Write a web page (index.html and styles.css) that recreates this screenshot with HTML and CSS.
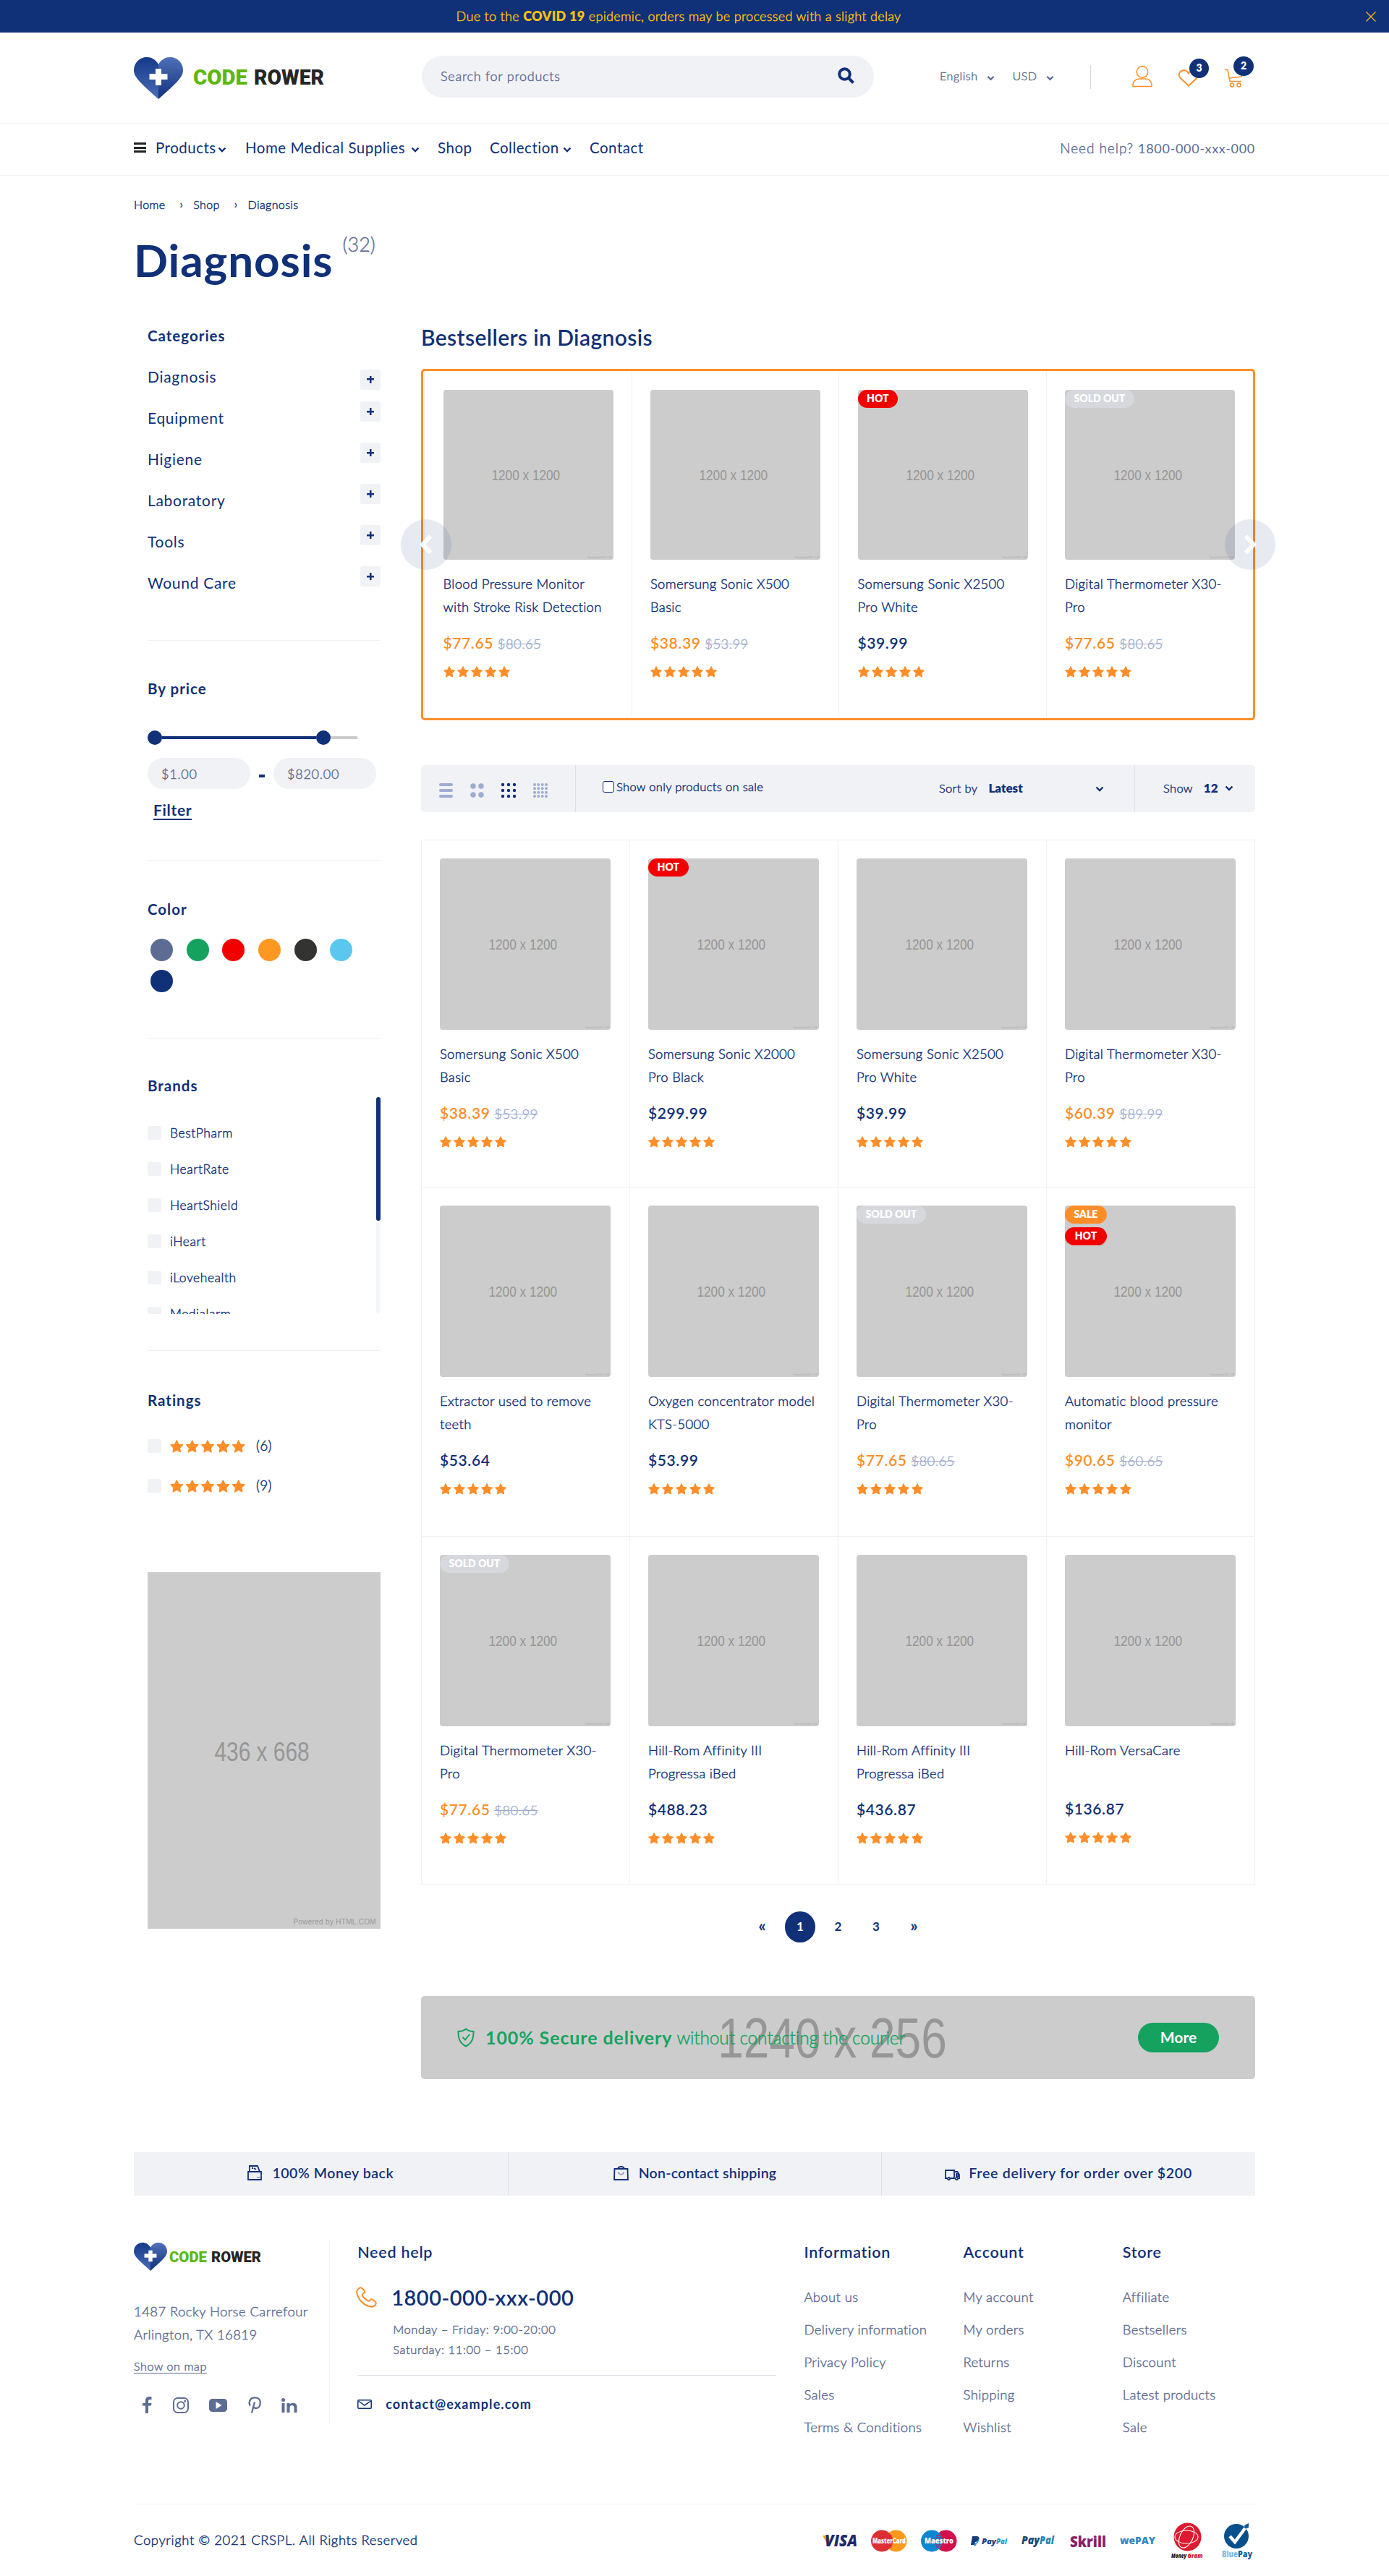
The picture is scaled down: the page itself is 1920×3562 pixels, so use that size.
FILE: index.html
```html
<!DOCTYPE html>
<html lang="en">
<head>
<meta charset="utf-8">
<title>Diagnosis – Code Rower</title>
<link rel="stylesheet" href="styles.css">
</head>
<body>
<svg class="sprite" width="0" height="0" aria-hidden="true">
  <defs>
    <linearGradient id="gl" x1="0" y1="0" x2="0" y2="1"><stop offset="0" stop-color="#153a8a"/><stop offset="1" stop-color="#4a6cb6"/></linearGradient>
    <linearGradient id="gr" x1="0" y1="0" x2="0" y2="1"><stop offset="0" stop-color="#4f70b8"/><stop offset="1" stop-color="#12307c"/></linearGradient>
  </defs>
  <symbol id="heart" viewBox="0 0 68 58" preserveAspectRatio="none">
    <path fill="url(#gl)" d="M34 10C30 3 24 0 18 0C8 0 0 8 0 18C0 27 7 34 34 58Z"/>
    <path fill="url(#gr)" d="M34 10C38 3 44 0 50 0C60 0 68 8 68 18C68 27 61 34 34 58Z"/>
    <path fill="#fff" d="M30 16h8v7h8.500v8H38v8h-8v-8h-8.500v-8H30z"/>
  </symbol>
  <symbol id="star" viewBox="0 0 16 16"><path stroke="#ff8e28" stroke-linejoin="round" d="M8 .6l2.300 4.700 5.200.8-3.700 3.700.8 5.200L8 12.700 3.400 15l.8-5.200L.5 6.100l5.200-.8z"/></symbol>
  <symbol id="stars" viewBox="0 0 92 16"><use href="#star" width="16" height="16"/><use href="#star" x="19" width="16" height="16"/><use href="#star" x="38" width="16" height="16"/><use href="#star" x="57" width="16" height="16"/><use href="#star" x="76" width="16" height="16"/></symbol>
  <symbol id="chev" viewBox="0 0 12 8"><path d="M1.500 1.500L6 6l4.500-4.500" fill="none" stroke="currentColor" stroke-width="2.400"/></symbol>
</svg>

<div class="notice">
  <p>Due to the <b>COVID 19</b> epidemic, orders may be processed with a slight delay</p>
  <svg width="14" height="14" viewBox="0 0 14 14"><path d="M.5.5l13 13M13.500.5l-13 13" stroke="#ffc20a" stroke-width="1.200"/></svg>
</div>

<header class="head"><div class="wrap head-row">
  <svg class="logo" width="270" height="60" viewBox="0 0 270 60"><use href="#heart" y="1" width="68" height="58"/><text x="82" y="39" textLength="75" lengthAdjust="spacingAndGlyphs" fill="#5cb811">CODE</text><text x="166" y="39" textLength="97" lengthAdjust="spacingAndGlyphs" fill="#262626">ROWER</text></svg>
  <div class="search"><span>Search for products</span><svg width="23" height="23" viewBox="0 0 23 23" fill="none" stroke="#103078" stroke-width="4"><circle cx="9.500" cy="9.500" r="7.300"/><path d="M14.500 14.500l7 7"/></svg></div>
  <div class="locale"><span>English</span><svg class="chev"><use href="#chev"/></svg><span class="usd">USD</span><svg class="chev"><use href="#chev"/></svg></div>
  <i class="bar"></i>
  <div class="tools">
    <svg width="28" height="30" viewBox="0 0 28 30" fill="none" stroke="#ff8e28" stroke-width="1.500"><circle cx="14" cy="8.500" r="7.700"/><path d="M1 28.500v-2a8.500 8.500 0 0 1 8.500-8.500h9a8.500 8.500 0 0 1 8.500 8.500v2z"/></svg>
    <div class="tool"><svg width="28" height="25" viewBox="0 0 30 26" fill="none" stroke="#ff8e28" stroke-width="2"><path d="M15 24L3 12.500C-1.500 7.500 2 1 8 1c4 0 6 2.500 7 4.500C16 3.500 18 1 22 1c6 0 9.500 6.500 5 11.500z"/></svg><b class="count c3">3</b></div>
    <div class="tool"><svg width="30" height="27" viewBox="0 0 30 27" fill="none" stroke="#ff8e28" stroke-width="1.500"><path d="M0 1.500h4l3 16h16M6 13l17-2 2-7"/><circle cx="10" cy="22.500" r="2.500"/><circle cx="19.500" cy="22.500" r="2.500"/></svg><b class="count c2">2</b></div>
  </div>
</div></header>

<nav class="nav"><div class="wrap nav-row">
  <i class="burger"></i>
  <span class="n1">Products</span><svg class="chev"><use href="#chev"/></svg>
  <span class="n2">Home Medical Supplies</span><svg class="chev"><use href="#chev"/></svg>
  <span class="n3">Shop</span>
  <span class="n4">Collection</span><svg class="chev"><use href="#chev"/></svg>
  <span class="n5">Contact</span>
  <p class="help">Need help? <b>1800-000-xxx-000</b></p>
</div></nav>

<main class="wrap">
  <div class="crumbs"><span>Home</span><i>›</i><span>Shop</span><i>›</i><span>Diagnosis</span></div>
  <h1>Diagnosis<sup>(32)</sup></h1>

  <div class="cols">
    <aside>
      <section class="s-cat">
        <h3>Categories</h3>
        <ul class="cats">
          <li>Diagnosis<i></i></li><li>Equipment<i></i></li><li>Higiene<i></i></li><li>Laboratory<i></i></li><li>Tools<i></i></li><li>Wound Care<i></i></li>
        </ul>
      </section>
      <section class="s-price">
        <h3>By price</h3>
        <div class="slider"><i class="knob"></i><i class="fill"></i><i class="knob"></i><i class="rest"></i></div>
        <div class="range"><span>$1.00</span><i></i><span>$820.00</span></div>
        <a class="filter">Filter</a>
      </section>
      <section class="s-color">
        <h3>Color</h3>
        <div class="swatches"><i class="w1"></i><i class="w2"></i><i class="w3"></i><i class="w4"></i><i class="w5"></i><i class="w6"></i><i class="w7"></i></div>
      </section>
      <section class="s-brand">
        <h3>Brands</h3>
        <div class="brandbox">
          <ul class="brands"><li><i></i>BestPharm</li><li><i></i>HeartRate</li><li><i></i>HeartShield</li><li><i></i>iHeart</li><li><i></i>iLovehealth</li><li><i></i>Medialarm</li></ul>
          <div class="track"><i></i></div>
        </div>
      </section>
      <section class="s-rate">
        <h3>Ratings</h3>
        <div class="rate"><i></i><svg class="big"><use href="#stars"/></svg>(6)</div>
        <div class="rate"><i></i><svg class="big"><use href="#stars"/></svg>(9)</div>
      </section>
      <div class="ad"><span>436 x 668</span><small>Powered by HTML.COM</small></div>
    </aside>

    <div class="content">
      <h2>Bestsellers in Diagnosis</h2>
      <div class="best">
        <article><div class="ph"><span>1200 x 1200</span><small>Powered by HTML.COM</small></div><p>Blood Pressure Monitor<br>with Stroke Risk Detection</p><div class="price sale">$77.65 <s>$80.65</s></div><svg class="st"><use href="#stars"/></svg></article>
        <article><div class="ph"><span>1200 x 1200</span><small>Powered by HTML.COM</small></div><p>Somersung Sonic X500<br>Basic</p><div class="price sale">$38.39 <s>$53.99</s></div><svg class="st"><use href="#stars"/></svg></article>
        <article><div class="ph"><span>1200 x 1200</span><small>Powered by HTML.COM</small><div class="tags"><b class="hot">HOT</b></div></div><p>Somersung Sonic X2500<br>Pro White</p><div class="price">$39.99</div><svg class="st"><use href="#stars"/></svg></article>
        <article><div class="ph"><span>1200 x 1200</span><small>Powered by HTML.COM</small><div class="tags"><b class="sold">SOLD OUT</b></div></div><p>Digital Thermometer X30-<br>Pro</p><div class="price sale">$77.65 <s>$80.65</s></div><svg class="st"><use href="#stars"/></svg></article>
        <div class="arrow prev"><svg width="18" height="28" viewBox="0 0 18 28"><path d="M15 2.500L4 14l11 11.500" fill="none" stroke="#fff" stroke-width="6"/></svg></div>
        <div class="arrow next"><svg width="18" height="28" viewBox="0 0 18 28"><path d="M3 2.500L14 14 3 25.500" fill="none" stroke="#fff" stroke-width="6"/></svg></div>
      </div>

      <div class="bar-tools">
        <div class="views">
          <svg width="19" height="20" viewBox="0 0 19 20"><path d="M2 2h15M2 10h15M2 18h15" stroke="#9dacd0" stroke-width="4" stroke-linecap="round"/></svg>
          <svg width="19" height="20" viewBox="0 0 19 20"><path d="M4 4h0M15 4h0M4 16h0M15 16h0" stroke="#9dacd0" stroke-width="7.500" stroke-linecap="round"/></svg>
          <svg width="20" height="20" viewBox="0 0 20 20"><path d="M2 2h0M10 2h0M18 2h0M2 10h0M10 10h0M18 10h0M2 18h0M10 18h0M18 18h0" stroke="#103078" stroke-width="4.400" stroke-linecap="round"/></svg>
          <svg width="20" height="20" viewBox="0 0 20 20"><path d="M2 2h0M7.300 2h0M12.700 2h0M18 2h0M2 7.300h0M7.300 7.300h0M12.700 7.300h0M18 7.300h0M2 12.700h0M7.300 12.700h0M12.700 12.700h0M18 12.700h0M2 18h0M7.300 18h0M12.700 18h0M18 18h0" stroke="#9dacd0" stroke-width="4" stroke-linecap="round"/></svg>
        </div>
        <div class="only"><i></i>Show only products on sale</div>
        <div class="sort"><span>Sort by</span><b>Latest</b><svg class="chev"><use href="#chev"/></svg></div>
        <div class="show"><span>Show</span><b>12</b><svg class="chev"><use href="#chev"/></svg></div>
      </div>

      <div class="grid">
        <article><div class="ph"><span>1200 x 1200</span><small>Powered by HTML.COM</small></div><p>Somersung Sonic X500<br>Basic</p><div class="price sale">$38.39 <s>$53.99</s></div><svg class="st"><use href="#stars"/></svg></article>
        <article><div class="ph"><span>1200 x 1200</span><small>Powered by HTML.COM</small><div class="tags"><b class="hot">HOT</b></div></div><p>Somersung Sonic X2000<br>Pro Black</p><div class="price">$299.99</div><svg class="st"><use href="#stars"/></svg></article>
        <article><div class="ph"><span>1200 x 1200</span><small>Powered by HTML.COM</small></div><p>Somersung Sonic X2500<br>Pro White</p><div class="price">$39.99</div><svg class="st"><use href="#stars"/></svg></article>
        <article><div class="ph"><span>1200 x 1200</span><small>Powered by HTML.COM</small></div><p>Digital Thermometer X30-<br>Pro</p><div class="price sale">$60.39 <s>$89.99</s></div><svg class="st"><use href="#stars"/></svg></article>

        <article><div class="ph"><span>1200 x 1200</span><small>Powered by HTML.COM</small></div><p>Extractor used to remove<br>teeth</p><div class="price">$53.64</div><svg class="st"><use href="#stars"/></svg></article>
        <article><div class="ph"><span>1200 x 1200</span><small>Powered by HTML.COM</small></div><p>Oxygen concentrator model<br>KTS-5000</p><div class="price">$53.99</div><svg class="st"><use href="#stars"/></svg></article>
        <article><div class="ph"><span>1200 x 1200</span><small>Powered by HTML.COM</small><div class="tags"><b class="sold">SOLD OUT</b></div></div><p>Digital Thermometer X30-<br>Pro</p><div class="price sale">$77.65 <s>$80.65</s></div><svg class="st"><use href="#stars"/></svg></article>
        <article><div class="ph"><span>1200 x 1200</span><small>Powered by HTML.COM</small><div class="tags"><b class="off">SALE</b><b class="hot">HOT</b></div></div><p>Automatic blood pressure<br>monitor</p><div class="price sale">$90.65 <s>$60.65</s></div><svg class="st"><use href="#stars"/></svg></article>

        <article><div class="ph"><span>1200 x 1200</span><small>Powered by HTML.COM</small><div class="tags"><b class="sold">SOLD OUT</b></div></div><p>Digital Thermometer X30-<br>Pro</p><div class="price sale">$77.65 <s>$80.65</s></div><svg class="st"><use href="#stars"/></svg></article>
        <article><div class="ph"><span>1200 x 1200</span><small>Powered by HTML.COM</small></div><p>Hill-Rom Affinity III<br>Progressa iBed</p><div class="price">$488.23</div><svg class="st"><use href="#stars"/></svg></article>
        <article><div class="ph"><span>1200 x 1200</span><small>Powered by HTML.COM</small></div><p>Hill-Rom Affinity III<br>Progressa iBed</p><div class="price">$436.87</div><svg class="st"><use href="#stars"/></svg></article>
        <article class="short"><div class="ph"><span>1200 x 1200</span><small>Powered by HTML.COM</small></div><p>Hill-Rom VersaCare</p><div class="price">$136.87</div><svg class="st"><use href="#stars"/></svg></article>
      </div>

      <div class="pages"><span class="step">«</span><span class="on">1</span><span>2</span><span>3</span><span class="step">»</span></div>

      <div class="banner">
        <svg width="24" height="27" viewBox="0 0 24 27" fill="none" stroke="#15a25f" stroke-width="2"><path d="M12 1.500C9 4 5 5 1.500 5c0 9 1.500 16 10.500 20.500C21 21 22.500 14 22.500 5 19 5 15 4 12 1.500z"/><path d="M7.500 13l3.500 3.500 6-7.500"/></svg>
        <p><b>100% Secure delivery</b> <span>without contacting the courier</span></p>
        <span class="size">1240 x 256</span>
        <a class="more">More</a>
      </div>
    </div>
  </div>

  <div class="features">
    <div><svg width="20" height="21" viewBox="0 0 20 21" fill="none" stroke="#103078" stroke-width="1.800"><path d="M3 9V1h11l3 8M6 4h2M9 4l3 2M1 9h18v11H1z"/><path d="M13 17h4" stroke="#9aa3bb"/></svg>100% Money back</div>
    <div><svg width="21" height="20" viewBox="0 0 21 20" fill="none" stroke="#103078" stroke-width="1.800"><path d="M1.500 4h18l.5 15H1z"/><path d="M6 4c1-4 8-4 9 0"/><path d="M7 8c0 5 7 5 7 0" stroke="#9aa3bb"/></svg>Non-contact shipping</div>
    <div class="f3"><svg width="21" height="15" viewBox="0 0 21 15" fill="none" stroke="#103078" stroke-width="1.800"><path d="M3 12H1V1h12v11H8M13 3h4.500L20 7v5h-1M16 6h3v3h-3z"/><circle cx="5.500" cy="12.500" r="1.600"/><circle cx="16.500" cy="12.500" r="1.600"/></svg>Free delivery for order over $200</div>
  </div>

  <div class="foot">
    <div class="f-brand">
      <svg class="logo small" width="200" height="42" viewBox="0 0 200 42"><use href="#heart" width="46" height="39"/><text x="49" y="27" textLength="52" lengthAdjust="spacingAndGlyphs" fill="#5cb811">CODE</text><text x="107" y="27" textLength="69" lengthAdjust="spacingAndGlyphs" fill="#262626">ROWER</text></svg>
      <p>1487 Rocky Horse Carrefour<br>Arlington, TX 16819</p>
      <a>Show on map</a>
      <div class="social">
        <svg width="13" height="23" viewBox="0 0 13 23"><path fill="#5d6c92" d="M4 23V12.500H0V9h4V6c0-4 2-6 5.500-6H12.500v4h-2C8.800 4 8 4.700 8 6.200V9h4.500L12 12.500H8V23z"/></svg>
        <svg width="22" height="22" viewBox="0 0 22 22" fill="none" stroke="#5d6c92" stroke-width="2"><rect x="1" y="1" width="20" height="20" rx="5.500"/><circle cx="11" cy="11" r="4.800"/><circle cx="16.700" cy="5.300" r=".6"/></svg>
        <svg width="25" height="18" viewBox="0 0 25 18"><rect width="25" height="18" rx="4.500" fill="#5d6c92"/><path d="M9.500 4v10l8-5z" fill="#fff"/></svg>
        <svg width="18" height="23" viewBox="0 0 18 23" fill="none" stroke="#5d6c92" stroke-width="2.300"><path d="M5 22.500L9 7.500M2.800 12.500C1 10 .8 1.300 9.300 1.300c5 0 7.500 3 7.500 6.700 0 5-2.600 8-5.800 8-1.700 0-3-1-3-2"/></svg>
        <svg width="22" height="20" viewBox="0 0 22 20" fill="#5d6c92"><circle cx="2.500" cy="2.500" r="2.500"/><path d="M.5 7h4v13h-4zM7.500 7h4v1.800C13 6 21.500 5 21.500 12v8h-4v-7c0-4-6-4-6 0v7h-4z"/></svg>
      </div>
    </div>
    <div class="f-help">
      <h4>Need help</h4>
      <div class="phone"><svg width="29" height="29" viewBox="0 0 29 29" fill="none" stroke="#ff8e28" stroke-width="2" stroke-linejoin="round"><path d="M6.500 1.200C4 1.500 1 4.500 1.200 7.500 2 16.500 11 27 22 27.800c3 .2 5.800-3 5.800-5.500 0-1-4.500-4.800-6.300-5-1.500 0-2.500 2.700-4 2.500-2.500-.5-9-6.500-8.700-9C9 9.500 12 8.500 12.200 7.200 12.300 5.500 8 1 6.500 1.200z"/></svg><b>1800-000-xxx-000</b></div>
      <p class="hours">Monday – Friday: 9:00-20:00<br>Saturday: 11:00 – 15:00</p>
      <div class="mail"><svg width="20" height="13" viewBox="0 0 20 13" fill="none" stroke="#103078" stroke-width="1.500"><rect x=".8" y=".8" width="18.400" height="11.400" rx="1"/><path d="M1.500 2L10 8l8.500-6"/></svg><b>contact@example.com</b></div>
    </div>
    <div class="links"><h4>Information</h4><a>About us</a><a>Delivery information</a><a>Privacy Policy</a><a>Sales</a><a>Terms &amp; Conditions</a></div>
    <div class="links"><h4>Account</h4><a>My account</a><a>My orders</a><a>Returns</a><a>Shipping</a><a>Wishlist</a></div>
    <div class="links"><h4>Store</h4><a>Affiliate</a><a>Bestsellers</a><a>Discount</a><a>Latest products</a><a>Sale</a></div>
  </div>

  <div class="bottom">
    <span>Copyright © 2021 CRSPL. All Rights Reserved</span>
    <div class="pay">
      <svg viewBox="0 0 50 50"><path d="M1 18h8l3 9-3 6z" fill="#f5a623"/><text x="4" y="33" font-size="22" textLength="45" lengthAdjust="spacingAndGlyphs" font-style="italic" fill="#1d2a6b">VISA</text></svg>
      <svg viewBox="0 0 50 50"><circle cx="34.500" cy="25.500" r="15" fill="#ff9a1c"/><circle cx="15" cy="25.500" r="15" fill="#dc2f34"/><path d="M21 18h8M20 21h10M20 31h10M21 34h8" stroke="#dc2f34" stroke-width="1.200"/><text x="2" y="29" font-size="10" textLength="46" lengthAdjust="spacingAndGlyphs" fill="#fff">MasterCard</text></svg>
      <svg viewBox="0 0 50 50"><circle cx="34.500" cy="25.500" r="15" fill="#d4104c"/><circle cx="15" cy="25.500" r="15" fill="#0b87d1"/><path d="M21 18h8M20 21h10M20 31h10M21 34h8" stroke="#d4104c" stroke-width="1.200"/><text x="5" y="29" font-size="10.500" textLength="40" lengthAdjust="spacingAndGlyphs" fill="#fff">Maestro</text></svg>
      <svg viewBox="0 0 50 50"><path d="M2 19h6c6 0 4 8-2 8l-1 4H0z" fill="#173a80"/><path d="M9 21c3 4-1 8-4 7l-1 4h3l1-3c3 0 4-6 1-8z" fill="#2a9bd8"/><text x="15" y="30" font-size="10.500" textLength="20" lengthAdjust="spacingAndGlyphs" font-style="italic" fill="#1f3b80">Pay</text><text x="35" y="30" font-size="10.500" textLength="15" lengthAdjust="spacingAndGlyphs" font-style="italic" fill="#2a9bd8">Pal</text></svg>
      <svg viewBox="0 0 50 50"><text x="2" y="30" font-size="15" textLength="25" lengthAdjust="spacingAndGlyphs" font-style="italic" fill="#174a72">Pay</text><text x="27" y="30" font-size="15" textLength="20" lengthAdjust="spacingAndGlyphs" font-style="italic" fill="#2187b3">Pal</text></svg>
      <svg viewBox="0 0 50 50"><text x="0" y="33.500" font-size="21" textLength="50" lengthAdjust="spacingAndGlyphs" fill="#862165">Skrill</text></svg>
      <svg viewBox="0 0 50 50"><text x="0" y="30" font-size="14" textLength="49" lengthAdjust="spacingAndGlyphs" fill="#3489c7">wePAY</text></svg>
      <svg viewBox="0 0 50 50"><ellipse cx="25.500" cy="20" rx="19" ry="19.500" fill="#dd1a2e"/><g fill="none" stroke="#fff" stroke-width="1.100"><ellipse cx="24" cy="20" rx="16" ry="9"/><ellipse cx="24" cy="20" rx="9" ry="16" transform="rotate(25 24 20)"/></g><text x="3" y="49" font-size="9" textLength="21" lengthAdjust="spacingAndGlyphs" font-style="italic" fill="#111">Money</text><text x="25.500" y="49" font-size="9" textLength="21" lengthAdjust="spacingAndGlyphs" font-style="italic" fill="#d01c2c">Gram</text></svg>
      <svg viewBox="0 0 50 50"><circle cx="24" cy="19" r="17" fill="#07508c"/><path d="M35 4l6-3v6l-5 2z" fill="#0b5a98"/><path d="M15 19l7 8L36 8" fill="none" stroke="#fff" stroke-width="4.500"/><text x="4" y="48" font-size="12" textLength="22" lengthAdjust="spacingAndGlyphs" fill="#7fb8e0">Blue</text><text x="26" y="48" font-size="12" textLength="20" lengthAdjust="spacingAndGlyphs" fill="#10609e">Pay</text></svg>
    </div>
  </div>
</main>
</body>
</html>
```
FILE: styles.css
```css
* { box-sizing: border-box; margin: 0; padding: 0; }
body { font: 300 18px/1.2 Lato, "Open Sans", sans-serif; -webkit-text-stroke: .45px currentColor; color: #103078; background: #fff; width: 1920px; }
b, h1, h2, h3, h4, svg text, .ph, .ad, .size, .price, .nav-row, .cats, .features, .filter, .more, .pages { -webkit-text-stroke-width: 0; }
.help, sup, .price s { -webkit-text-stroke-width: .4px; }
b { font-weight: 700; }
i { font-style: normal; }
ul { list-style: none; }
svg { display: block; flex: none; overflow: visible; }
.sprite { position: absolute; }
.wrap { width: 1550px; margin: 0 auto; }
.chev { width: 12px; height: 8px; }

/* Notice */
.notice { height: 45px; background: #103078; color: #ffc20a; display: flex; align-items: center; gap: 12px; padding-right: 18px; letter-spacing: .32px; }
.notice p { flex: 1; text-align: center; }
.notice b { font-weight: 800; }

/* Header */
.head { height: 126px; border-bottom: 1px solid #f1f2f4; padding-top: 32px; }
.head-row { display: flex; align-items: center; height: 58px; }
.logo { margin: 4px 128px 0 0; font: 900 29px "Roboto", sans-serif; }
.logo.small { margin: 0; font-size: 21px; }
.search { width: 625px; height: 58px; border-radius: 29px; background: #f1f2f6; color: #5d6c92; display: flex; align-items: center; justify-content: space-between; padding: 0 27px 0 26px; letter-spacing: .75px; }
.search svg { margin-bottom: 3px; }
.locale { display: flex; align-items: center; margin-left: 91px; width: 208px; font-size: 16px; letter-spacing: .55px; color: #5d6c92; padding-bottom: 2px; }
.locale .chev { margin: 5px 0 0 12px; width: 11px; }
.usd { margin-left: 25px; }
.bar { width: 1px; height: 33px; background: #d5d9e6; }
.tools { display: flex; align-items: center; margin-left: 57px; }
.tool { position: relative; margin: 5px 0 0 36px; }
.count { position: absolute; background: #103078; color: #fff; border-radius: 50%; font-size: 14px; font-weight: 800; display: flex; align-items: center; justify-content: center; }
.c3 { width: 27px; height: 27px; left: 15px; top: -15px; }
.c2 { width: 28px; height: 27px; left: 12px; top: -17px; }

/* Navigation */
.nav { height: 72px; border-bottom: 1px solid #f1f2f4; }
.nav-row { display: flex; align-items: center; height: 66px; font-size: 20.500px; font-weight: 400; letter-spacing: .5px; }
.burger { width: 17px; height: 14px; border: solid #222; border-width: 3px 0; margin-right: 13px; background: linear-gradient(#222, #222) 0 50%/100% 3px no-repeat; background-origin: content-box; }
.nav-row .chev { margin: 6px 0 0 7px; width: 12px; }
.n1 { width: 79px; } .n2 { margin-left: 26px; width: 222px; } .n3 { margin-left: 25px; width: 47px; } .n4 { margin-left: 25px; width: 94px; } .n5 { margin-left: 25px; }
.nav-row span { white-space: nowrap; }
.help { margin-left: auto; font-size: 19px; font-weight: 300; color: #5d6c92; letter-spacing: .95px; padding-top: 3px; }
.help b { font-size: 18px; font-weight: 400; letter-spacing: .7px; }

/* Title */
.crumbs { display: flex; align-items: center; height: 24px; margin-top: 28px; font-size: 16px; letter-spacing: .4px; }
.crumbs i { margin: -2px 14px 0 20px; }
h1 { font-size: 62px; font-weight: 700; line-height: 74px; height: 72px; margin-top: 27px; letter-spacing: .9px; display: flex; }
sup { font-size: 27px; font-weight: 300; color: #5d6c92; line-height: 32px; letter-spacing: 0; margin-left: 13px; }

.cols { display: flex; gap: 56px; margin-top: 52px; }

/* Sidebar */
aside { width: 341px; padding-left: 19px; }
section { border-bottom: 1px solid #f0f1f5; }
h3 { font-size: 20.500px; font-weight: 700; line-height: 36px; letter-spacing: 1px; }
.s-cat { height: 440px; }
.s-price { height: 304px; padding-top: 48px; }
.s-color { height: 246px; padding-top: 49px; }
.s-brand { height: 432px; padding-top: 47px; }
.s-rate { height: 306px; padding-top: 50px; border: 0; }
.cats { margin-top: 10px; }
.cats li { height: 57px; display: flex; justify-content: space-between; align-items: center; font-size: 21px; font-weight: 400; letter-spacing: .7px; }
.cats i { width: 28px; height: 28px; border-radius: 3px; margin-bottom: 17px; background: linear-gradient(#103078, #103078) 50%/10px 2.5px no-repeat, linear-gradient(#103078, #103078) 50%/2.500px 10px no-repeat, #f1f2f6; }
.cats li:first-child i { margin: 8px 0 0; }
.slider { display: flex; align-items: center; width: 290px; margin-top: 40px; }
.knob { width: 20px; height: 20px; border-radius: 50%; background: #103078; }
.fill { width: 213px; height: 4px; background: #103078; }
.rest { flex: 1; height: 4px; background: #ccc; }
.range { display: flex; align-items: center; margin-top: 18px; color: #5d6c92; letter-spacing: .75px; }
.range span { width: 142px; height: 43px; border-radius: 22px; background: #f1f2f6; padding-left: 19px; line-height: 44px; }
.range i { width: 8px; height: 4px; background: #103078; margin: 7px 12px 0; }
.filter { display: inline-block; margin: 16px 0 0 8px; font-size: 21px; font-weight: 700; letter-spacing: .7px; line-height: 26px; border-bottom: 2px solid #103078; height: 27px; }
.swatches { display: grid; grid-template-columns: repeat(6, 49.7px); row-gap: 12px; margin: 23px 0 0 4px; }
.swatches i { width: 31px; height: 31px; border-radius: 50%; }
.w1 { background: #5d6c92; } .w2 { background: #15a25f; } .w3 { background: #f20000; } .w4 { background: #ff9822; } .w5 { background: #333431; } .w6 { background: #5ac8ee; } .w7 { background: #103078; }
.brandbox { display: flex; justify-content: space-between; height: 300px; margin-top: -2px; overflow: hidden; }
.brands { padding-top: 24px; }
.brands li { height: 50px; display: flex; align-items: center; font-size: 17.500px; letter-spacing: .55px; }
.brands li i, .rate i { width: 19px; height: 19px; border-radius: 3px; background: #f1f2f6; margin-right: 12px; }
.track { width: 6px; height: 300px; border-radius: 3px; background: #f6f7fb; }
.track i { display: block; height: 171px; border-radius: 3px; background: #103078; }
.rate { height: 55px; display: flex; align-items: center; letter-spacing: .3px; font-size: 19px; }
h3 + .rate { margin-top: 18px; }
.big { width: 104px; height: 18px; fill: #ff8e28; margin-right: 15px; }
.ad { position: relative; width: 322px; height: 493px; background: #ccc; color: #969696; display: flex; align-items: center; justify-content: center; font: 36px "Liberation Sans", Arial, sans-serif; }
.ad span { transform: scaleX(.83); white-space: nowrap; margin: 5px 5px 0 0; }
.ad small { position: absolute; right: 6px; bottom: 4px; font-size: 10px; letter-spacing: .3px; white-space: nowrap; }

/* Products */
.content { width: 1153px; }
h2 { font-size: 30px; font-weight: 600; line-height: 40px; letter-spacing: .4px; margin-bottom: 24px; }
.best { position: relative; display: grid; grid-template-columns: repeat(4, 286.500px); height: 486px; border: 3px solid #ff8e28; border-radius: 5px; padding: 1px 0 1px 1px; }
.best article { border-left: 1px solid #f0f1f5; padding: 25px 0 0 25.500px; }
.best .ph { width: 235px; height: 235px; }
.ph { position: relative; width: 236px; height: 237px; border-radius: 4px; background: #ccc; color: #969696; display: flex; align-items: center; justify-content: center; font: 21px "Liberation Sans", Arial, sans-serif; overflow: hidden; }
.ph > span { transform: scaleX(.82); margin-right: 6px; white-space: nowrap; }
.ph small { position: absolute; right: 2px; bottom: 1px; font-size: 3px; color: #aaa; white-space: nowrap; }
article p { margin-top: 17px; height: 64px; font-size: 18.500px; line-height: 32px; letter-spacing: .32px; white-space: nowrap; }
.price { margin-top: 18px; height: 30px; line-height: 31px; font-size: 21px; font-weight: 600; letter-spacing: .6px; }
.sale { color: #ff8e28; }
.price s { font-size: 18.500px; font-weight: 300; color: #9dacd0; letter-spacing: .4px; }
.st { width: 92px; height: 16px; margin-top: 18px; fill: #ff8e28; }
.tags { position: absolute; left: 0; top: 0; display: flex; flex-direction: column; gap: 5px; }
.tags b { height: 25px; border-radius: 13px; padding: 0 12.500px; color: #fff; font: 800 14px/24px Lato, sans-serif; text-align: center; }
.tags .hot { background: #f20000; }
.tags .sold { background: #d6d8de; }
.tags .off { background: #ff8e28; }
.arrow { position: absolute; top: 205px; width: 70px; height: 70px; border-radius: 50%; background: rgba(16, 48, 120, .1); display: flex; align-items: center; justify-content: center; }
.prev { left: -31px; } .next { right: -31px; }

.bar-tools { display: flex; align-items: center; height: 65px; margin: 62px 0 38px; background: #f1f2f6; border-radius: 5px; font-size: 16.500px; letter-spacing: .33px; }
.views { display: flex; gap: 24px; width: 214px; height: 65px; padding-left: 25px; align-items: center; border-right: 1px solid #dcdfea; padding-top: 4px; }
.only { display: flex; align-items: center; padding: 0 0 4px 37px; width: 502px; }
.only i { width: 16px; height: 16px; border: 1px solid #103078; border-radius: 3px; background: #fff; margin-right: 3px; }
.sort, .show { display: flex; align-items: center; }
.sort { width: 271px; height: 65px; border-right: 1px solid #dcdfea; }
.sort b, .show b { margin-left: 15px; font-size: 17px; font-weight: 800; letter-spacing: 0; }
.sort b { width: 148px; }
.show { padding-left: 39px; }
.show .chev { margin-left: 9px; }

.grid { display: grid; grid-template-columns: repeat(4, 288px); grid-template-rows: 480px 483px 481px; border: solid #f0f1f5; border-width: 1px 0 0 1px; }
.grid article { border: solid #f0f1f5; border-width: 0 1px 1px 0; padding: 25px 0 0 25px; }
.grid .short .price { margin-top: 17px; }

.pages { display: flex; justify-content: center; gap: 10px; margin: 37px 0 74px; }
.pages span { width: 42.500px; height: 43px; line-height: 42px; text-align: center; font-size: 17px; font-weight: 700; }
.pages .on { background: #103078; color: #fff; border-radius: 50%; }
.pages .step { font-size: 23px; line-height: 38px; }

.banner { position: relative; height: 115px; background: #ccc; border-radius: 5px; display: flex; align-items: center; padding: 0 50px; color: #15a25f; }
.banner p { margin-left: 15px; flex: 1; font-size: 24.500px; letter-spacing: -.15px; z-index: 1; }
.banner b { font-weight: 700; font-size: 25px; letter-spacing: .9px; }
.size { position: absolute; left: 0; right: 0; top: 13px; text-align: center; color: #969696; font: 78px "Liberation Sans", Arial, sans-serif; transform: translateX(-8px) scaleX(.82); }
.more { width: 112px; height: 41px; border-radius: 21px; background: #15a25f; color: #fff; font-size: 21px; font-weight: 700; text-align: center; line-height: 39px; z-index: 1; }

/* Footer */
.features { display: grid; grid-template-columns: repeat(3, 1fr); height: 60px; margin-top: 101px; background: #f1f2f6; font-size: 19.500px; font-weight: 600; letter-spacing: .25px; }
.features div { display: flex; align-items: center; justify-content: center; gap: 14px; padding-bottom: 3px; }
.features div + div { border-left: 1px solid #dcdfea; }
.features div:first-child { letter-spacing: .55px; }
.features .f3 { gap: 12px; letter-spacing: .75px; }
.features .f3 svg { margin-top: 5px; }

.foot { display: grid; grid-template-columns: 271px 579px 182px 182px 1fr; column-gap: 38.200px; height: 364px; margin-top: 62px; }
.f-brand { height: 253px; border-right: 1px solid #f0f1f5; padding-top: 3px; color: #5d6c92; }
.f-brand p { margin-top: 37px; font-size: 18.500px; line-height: 32px; letter-spacing: .42px; }
.f-brand a { display: inline-block; margin-top: 16px; font-size: 16px; line-height: 24px; letter-spacing: .65px; text-decoration: underline; text-underline-offset: 3px; }
.social { display: flex; align-items: center; gap: 28.500px; margin: 30px 0 0 12px; }
h4 { font-size: 21.500px; font-weight: 600; line-height: 32px; letter-spacing: .75px; }
.phone { display: flex; align-items: center; height: 40px; margin-top: 27px; gap: 20px; font-size: 29px; letter-spacing: .5px; }
.phone b { font-weight: 600; }
.phone svg { margin: 0 0 2px -2px; }
.hours { margin: 10px 0 21px 49px; font-size: 16.500px; line-height: 28px; letter-spacing: .6px; color: #5d6c92; }
.mail { display: flex; align-items: center; gap: 19px; border-top: 1px solid #dfe1e7; padding-top: 24px; letter-spacing: 1.1px; line-height: 30px; }
.links h4 { margin-bottom: 24px; }
.links a { display: block; font-size: 18.500px; line-height: 45px; color: #5d6c92; letter-spacing: .37px; white-space: nowrap; }
.bottom { display: flex; align-items: center; justify-content: space-between; height: 100px; border-top: 1px solid #f0f1f5; font-size: 18.500px; letter-spacing: .6px; }
.pay { display: flex; gap: 18.700px; font: 800 12px "Open Sans", sans-serif; letter-spacing: 0; }
.pay svg { width: 50px; height: 50px; }
```
